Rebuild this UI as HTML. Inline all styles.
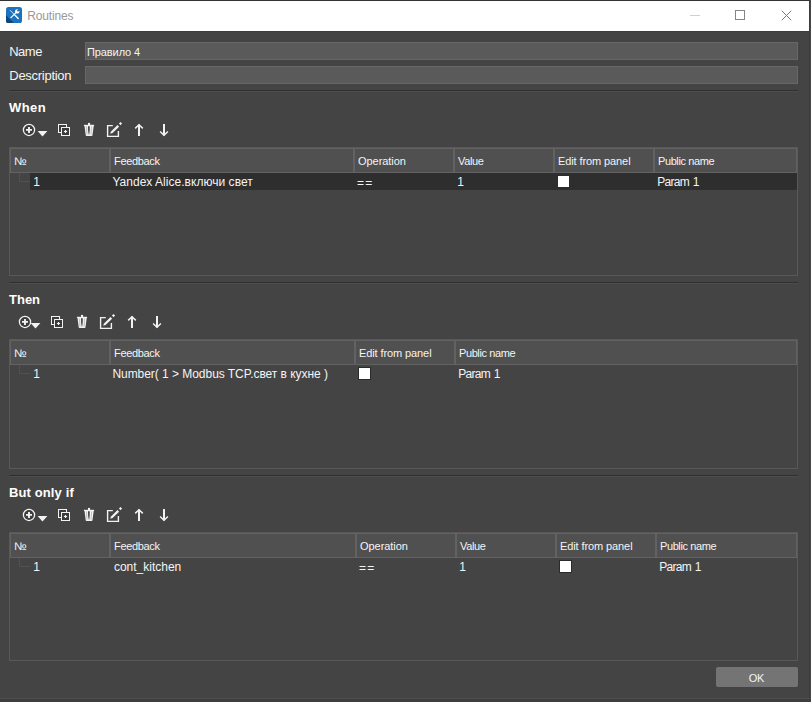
<!DOCTYPE html>
<html lang="en">
<head>
<meta charset="utf-8">
<title>Routines</title>
<style>
html,body{margin:0;padding:0;}
body{width:811px;height:702px;overflow:hidden;background:#444444;position:relative;
 font-family:"Liberation Sans",sans-serif;color:#f4f4f4;}
.abs{position:absolute;}
.t{position:absolute;white-space:nowrap;line-height:1;}
#topline{left:0;top:0;width:811px;height:1px;background:#333333;}
#titlebar{left:0;top:1px;width:809px;height:30px;background:#ffffff;}
#rb1{left:809px;top:0;width:1px;height:702px;background:#3c3c3c;}
#rb2{left:810px;top:0;width:1px;height:702px;background:#484848;}
#bb1{left:0;top:698px;width:811px;height:1px;background:#4e4e4e;}
#bb2{left:0;top:699px;width:811px;height:3px;background:#3e3e3e;}
#title{left:27.2px;top:10px;font-size:12px;color:#999999;letter-spacing:-0.15px;}
.lbl{font-size:13px;}
.inp{position:absolute;left:85px;width:711px;height:16px;background:#5a5a5a;border:1px solid #676767;}
.sep{position:absolute;left:9px;width:789px;height:1px;background:#2f2f2f;}
.sep2{position:absolute;left:9px;width:789px;height:1px;background:#4d4d4d;}
.h{font-size:13px;font-weight:bold;color:#ffffff;}
.frame{position:absolute;left:9px;width:787px;border:1px solid #595959;}
.hc{position:absolute;height:23px;background:#505050;border:1px solid #626262;}
.ht{font-size:11px;}
.rt{font-size:12px;}
.sel{position:absolute;background:#2e2e2e;height:17px;}
.cb{position:absolute;width:11px;height:11px;background:#ffffff;outline:1px solid #2b2b2b;}
.tl{position:absolute;background:#515151;}
#ok{left:716px;top:667px;width:82px;height:20px;background:#747474;border-radius:2px;}
</style>
</head>
<body>
<div class="abs" id="topline"></div>
<div class="abs" id="titlebar"></div>
<div class="abs" style="left:0;top:31px;width:809px;height:1px;background:#3d3d3d"></div>
<div class="abs" id="rb1"></div>
<div class="abs" id="rb2"></div>
<div class="abs" id="bb1"></div>
<div class="abs" id="bb2"></div>
<svg class="abs" style="left:0;top:0" width="811" height="32" viewBox="0 0 811 32" fill="none">
<defs><clipPath id="ic"><rect x="6" y="7" width="16" height="16" rx="2.6"/></clipPath></defs>
<g clip-path="url(#ic)">
<rect x="6" y="7" width="16" height="16" fill="#1c72bd"/>
<path d="M6 15.2L13.9 23H6Z" fill="#0f4578"/>
<path d="M10 10.2L14.4 14.6" stroke="#ffffff" stroke-width="0.8"/>
<path d="M14.8 15L18.2 18.4" stroke="#ffffff" stroke-width="1.4" stroke-linecap="round"/>
<path d="M10.9 17.6L16.2 12.3" stroke="#ffffff" stroke-width="1.2" stroke-linecap="round"/>
<circle cx="17.2" cy="11.4" r="2.2" fill="#ffffff"/>
<path d="M17.4 11.2L20 8.6" stroke="#1c72bd" stroke-width="1.7"/>
</g>
<path d="M690 15.5H700" stroke="#cfcfcf" stroke-width="1"/>
<rect x="735.5" y="10.5" width="9" height="9" stroke="#858585" stroke-width="1"/>
<path d="M781.75 10.75L791.25 20.25M791.25 10.75L781.75 20.25" stroke="#7a7a7a" stroke-width="1"/>
</svg>
<div class="t" id="title">Routines</div>

<div class="t lbl" style="left:9.2px;top:45px;letter-spacing:-0.5px">Name</div>
<div class="t lbl" style="left:9.3px;top:69px;letter-spacing:-0.28px">Description</div>
<div class="inp" style="top:42px;"></div>
<div class="inp" style="top:66px;"></div>
<div class="t" style="left:87px;top:46.8px;font-size:11px;letter-spacing:-0.1px">Правило 4</div>

<!-- SECTIONS -->
<div class="sep" style="top:90px"></div><div class="sep2" style="top:91px"></div>
<div class="t h" style="left:9px;top:101px;letter-spacing:0.4px">When</div>
<svg class="abs" style="left:0;top:120px" width="200" height="22" viewBox="0 0 200 22" fill="none" stroke="#f2f2f2" stroke-width="1">
<defs><linearGradient id="tg124" x1="0" y1="6" x2="0" y2="15" gradientUnits="userSpaceOnUse"><stop offset="0" stop-color="#262626"/><stop offset="0.5" stop-color="#3a3a3a"/><stop offset="1" stop-color="#c8c8c8"/></linearGradient></defs>
<g transform="translate(0,0)"><circle cx="29" cy="9.95" r="5.6" stroke-width="1.3" fill="#3d3d3d"/><path d="M26 9.9H32M29 6.9V12.9" stroke-width="1.9"/></g>
<g transform="translate(0,0)">
<path d="M37.6 10.9H47.4L42.5 16.4Z" fill="#f2f2f2" stroke="none"/>
<rect x="58.5" y="4.5" width="8" height="8" fill="#3d3d3d"/><rect x="61.5" y="7.5" width="8" height="8" fill="#3a3a3a"/><path d="M63.9 11.5H67.1M65.5 9.9V13.1" stroke-width="1.2"/>
<path d="M83.9 4.8H94.1V6H83.9Z" fill="#f2f2f2" stroke="none"/><path d="M88 2.9H90.1V5H88Z" fill="#f2f2f2" stroke="none"/><path d="M84.5 6H93.7L92.5 15.3Q92.4 16.1 91.6 16.1H86.6Q85.8 16.1 85.7 15.3Z" fill="#f2f2f2" stroke="none"/><path d="M88.9 6.3V14.6" stroke="url(#tg124)" stroke-width="1.5"/><path d="M86.45 6.6L86.95 14.6M91.55 6.6L91.05 14.6" stroke="#a0a0a0" stroke-width="0.6"/>
<path d="M112.8 5.6H107.6V16.4H118.4V11" stroke-width="1.4"/><path d="M110.2 13.8L111 11.4L117.5 5.1L119.1 6.7L112.6 13Z" fill="#f2f2f2" stroke="none"/><path d="M120.5 2L122.1 3.6L120.5 5.2L118.9 3.6Z" fill="#f2f2f2" stroke="none"/>
<path d="M139 4.6V16.1" stroke-width="2"/><path d="M135.2 8.4L139 4.8L142.8 8.4" stroke-width="1.5"/>
<path d="M164 4V15.4" stroke-width="2"/><path d="M160.1 11.5L164 15.2L167.9 11.5" stroke-width="1.5"/>
</g></svg>

<div class="frame" style="top:147px;height:127px"></div>
<div class="sel" style="left:30px;top:173px;width:767px"></div>
<div class="tl" style="left:19px;top:173px;width:1px;height:9px"></div><div class="tl" style="left:19px;top:181px;width:11px;height:1px"></div>
<div class="hc" style="left:10px;top:148px;width:98px"></div>
<div class="t ht" style="left:14.4px;top:156px;transform:scaleX(1.08);transform-origin:0 0">№</div>
<div class="t rt" style="left:33.3px;top:176px;letter-spacing:0px">1</div>
<div class="hc" style="left:110px;top:148px;width:242px"></div>
<div class="t ht" style="left:114px;top:156px;letter-spacing:-0.33px">Feedback</div>
<div class="t rt" style="left:112.4px;top:176px;letter-spacing:0.03px">Yandex Alice.включи свет</div>
<div class="hc" style="left:354px;top:148px;width:98px"></div>
<div class="t ht" style="left:358px;top:156px;letter-spacing:-0.05px">Operation</div>
<div class="t rt" style="left:357.1px;top:177px;letter-spacing:1.1px">==</div>
<div class="hc" style="left:454px;top:148px;width:98px"></div>
<div class="t ht" style="left:458px;top:156px;letter-spacing:-0.35px">Value</div>
<div class="t rt" style="left:457.3px;top:176px;letter-spacing:0px">1</div>
<div class="hc" style="left:554px;top:148px;width:98px"></div>
<div class="t ht" style="left:558px;top:156px;letter-spacing:-0.1px">Edit from panel</div>
<div class="cb" style="left:558px;top:176px"></div>
<div class="hc" style="left:654px;top:148px;width:141px"></div>
<div class="t ht" style="left:658px;top:156px;letter-spacing:-0.4px">Public name</div>
<div class="t rt" style="left:657.2px;top:176px;letter-spacing:-0.7px;word-spacing:1px">Param 1</div>
<div class="sep" style="top:282px"></div><div class="sep2" style="top:283px"></div>
<div class="t h" style="left:9px;top:293px;letter-spacing:0px">Then</div>
<svg class="abs" style="left:0;top:312px" width="200" height="22" viewBox="0 0 200 22" fill="none" stroke="#f2f2f2" stroke-width="1">
<defs><linearGradient id="tg316" x1="0" y1="6" x2="0" y2="15" gradientUnits="userSpaceOnUse"><stop offset="0" stop-color="#262626"/><stop offset="0.5" stop-color="#3a3a3a"/><stop offset="1" stop-color="#c8c8c8"/></linearGradient></defs>
<g transform="translate(-4,0)"><circle cx="29" cy="9.95" r="5.6" stroke-width="1.3" fill="#3d3d3d"/><path d="M26 9.9H32M29 6.9V12.9" stroke-width="1.9"/></g>
<g transform="translate(-7,0)">
<path d="M37.6 10.9H47.4L42.5 16.4Z" fill="#f2f2f2" stroke="none"/>
<rect x="58.5" y="4.5" width="8" height="8" fill="#3d3d3d"/><rect x="61.5" y="7.5" width="8" height="8" fill="#3a3a3a"/><path d="M63.9 11.5H67.1M65.5 9.9V13.1" stroke-width="1.2"/>
<path d="M83.9 4.8H94.1V6H83.9Z" fill="#f2f2f2" stroke="none"/><path d="M88 2.9H90.1V5H88Z" fill="#f2f2f2" stroke="none"/><path d="M84.5 6H93.7L92.5 15.3Q92.4 16.1 91.6 16.1H86.6Q85.8 16.1 85.7 15.3Z" fill="#f2f2f2" stroke="none"/><path d="M88.9 6.3V14.6" stroke="url(#tg316)" stroke-width="1.5"/><path d="M86.45 6.6L86.95 14.6M91.55 6.6L91.05 14.6" stroke="#a0a0a0" stroke-width="0.6"/>
<path d="M112.8 5.6H107.6V16.4H118.4V11" stroke-width="1.4"/><path d="M110.2 13.8L111 11.4L117.5 5.1L119.1 6.7L112.6 13Z" fill="#f2f2f2" stroke="none"/><path d="M120.5 2L122.1 3.6L120.5 5.2L118.9 3.6Z" fill="#f2f2f2" stroke="none"/>
<path d="M139 4.6V16.1" stroke-width="2"/><path d="M135.2 8.4L139 4.8L142.8 8.4" stroke-width="1.5"/>
<path d="M164 4V15.4" stroke-width="2"/><path d="M160.1 11.5L164 15.2L167.9 11.5" stroke-width="1.5"/>
</g></svg>

<div class="frame" style="top:339px;height:128px"></div>
<div class="tl" style="left:19px;top:365px;width:1px;height:9px"></div><div class="tl" style="left:19px;top:373px;width:11px;height:1px"></div>
<div class="hc" style="left:10px;top:340px;width:98px"></div>
<div class="t ht" style="left:14.4px;top:348px;transform:scaleX(1.08);transform-origin:0 0">№</div>
<div class="t rt" style="left:33.3px;top:368px;letter-spacing:0px">1</div>
<div class="hc" style="left:110px;top:340px;width:243px"></div>
<div class="t ht" style="left:114px;top:348px;letter-spacing:-0.33px">Feedback</div>
<div class="t rt" style="left:112.4px;top:368px;letter-spacing:-0.04px">Number( 1 &gt; Modbus TCP.свет в кухне )</div>
<div class="hc" style="left:355px;top:340px;width:98px"></div>
<div class="t ht" style="left:359px;top:348px;letter-spacing:-0.1px">Edit from panel</div>
<div class="cb" style="left:359px;top:368px"></div>
<div class="hc" style="left:455px;top:340px;width:340px"></div>
<div class="t ht" style="left:459px;top:348px;letter-spacing:-0.4px">Public name</div>
<div class="t rt" style="left:458.2px;top:368px;letter-spacing:-0.7px;word-spacing:1px">Param 1</div>
<div class="sep" style="top:475px"></div><div class="sep2" style="top:476px"></div>
<div class="t h" style="left:9px;top:486px;letter-spacing:0.12px">But only if</div>
<svg class="abs" style="left:0;top:505px" width="200" height="22" viewBox="0 0 200 22" fill="none" stroke="#f2f2f2" stroke-width="1">
<defs><linearGradient id="tg509" x1="0" y1="6" x2="0" y2="15" gradientUnits="userSpaceOnUse"><stop offset="0" stop-color="#262626"/><stop offset="0.5" stop-color="#3a3a3a"/><stop offset="1" stop-color="#c8c8c8"/></linearGradient></defs>
<g transform="translate(0,0)"><circle cx="29" cy="9.95" r="5.6" stroke-width="1.3" fill="#3d3d3d"/><path d="M26 9.9H32M29 6.9V12.9" stroke-width="1.9"/></g>
<g transform="translate(0,0)">
<path d="M37.6 10.9H47.4L42.5 16.4Z" fill="#f2f2f2" stroke="none"/>
<rect x="58.5" y="4.5" width="8" height="8" fill="#3d3d3d"/><rect x="61.5" y="7.5" width="8" height="8" fill="#3a3a3a"/><path d="M63.9 11.5H67.1M65.5 9.9V13.1" stroke-width="1.2"/>
<path d="M83.9 4.8H94.1V6H83.9Z" fill="#f2f2f2" stroke="none"/><path d="M88 2.9H90.1V5H88Z" fill="#f2f2f2" stroke="none"/><path d="M84.5 6H93.7L92.5 15.3Q92.4 16.1 91.6 16.1H86.6Q85.8 16.1 85.7 15.3Z" fill="#f2f2f2" stroke="none"/><path d="M88.9 6.3V14.6" stroke="url(#tg509)" stroke-width="1.5"/><path d="M86.45 6.6L86.95 14.6M91.55 6.6L91.05 14.6" stroke="#a0a0a0" stroke-width="0.6"/>
<path d="M112.8 5.6H107.6V16.4H118.4V11" stroke-width="1.4"/><path d="M110.2 13.8L111 11.4L117.5 5.1L119.1 6.7L112.6 13Z" fill="#f2f2f2" stroke="none"/><path d="M120.5 2L122.1 3.6L120.5 5.2L118.9 3.6Z" fill="#f2f2f2" stroke="none"/>
<path d="M139 4.6V16.1" stroke-width="2"/><path d="M135.2 8.4L139 4.8L142.8 8.4" stroke-width="1.5"/>
<path d="M164 4V15.4" stroke-width="2"/><path d="M160.1 11.5L164 15.2L167.9 11.5" stroke-width="1.5"/>
</g></svg>

<div class="frame" style="top:532px;height:127px"></div>
<div class="tl" style="left:19px;top:558px;width:1px;height:9px"></div><div class="tl" style="left:19px;top:566px;width:11px;height:1px"></div>
<div class="hc" style="left:10px;top:533px;width:98px"></div>
<div class="t ht" style="left:14.4px;top:541px;transform:scaleX(1.08);transform-origin:0 0">№</div>
<div class="t rt" style="left:33.3px;top:561px;letter-spacing:0px">1</div>
<div class="hc" style="left:110px;top:533px;width:244px"></div>
<div class="t ht" style="left:114px;top:541px;letter-spacing:-0.33px">Feedback</div>
<div class="t rt" style="left:113.9px;top:561px;letter-spacing:0px">cont_kitchen</div>
<div class="hc" style="left:356px;top:533px;width:98px"></div>
<div class="t ht" style="left:360px;top:541px;letter-spacing:-0.05px">Operation</div>
<div class="t rt" style="left:359.1px;top:562px;letter-spacing:1.1px">==</div>
<div class="hc" style="left:456px;top:533px;width:98px"></div>
<div class="t ht" style="left:460px;top:541px;letter-spacing:-0.35px">Value</div>
<div class="t rt" style="left:459.3px;top:561px;letter-spacing:0px">1</div>
<div class="hc" style="left:556px;top:533px;width:98px"></div>
<div class="t ht" style="left:560px;top:541px;letter-spacing:-0.1px">Edit from panel</div>
<div class="cb" style="left:560px;top:561px"></div>
<div class="hc" style="left:656px;top:533px;width:139px"></div>
<div class="t ht" style="left:660px;top:541px;letter-spacing:-0.4px">Public name</div>
<div class="t rt" style="left:659.2px;top:561px;letter-spacing:-0.7px;word-spacing:1px">Param 1</div>
<!-- /SECTIONS -->

<div class="abs" id="ok"></div>
<div class="t" style="left:748.8px;top:673px;font-size:11px;letter-spacing:-0.4px">OK</div>
</body>
</html>
